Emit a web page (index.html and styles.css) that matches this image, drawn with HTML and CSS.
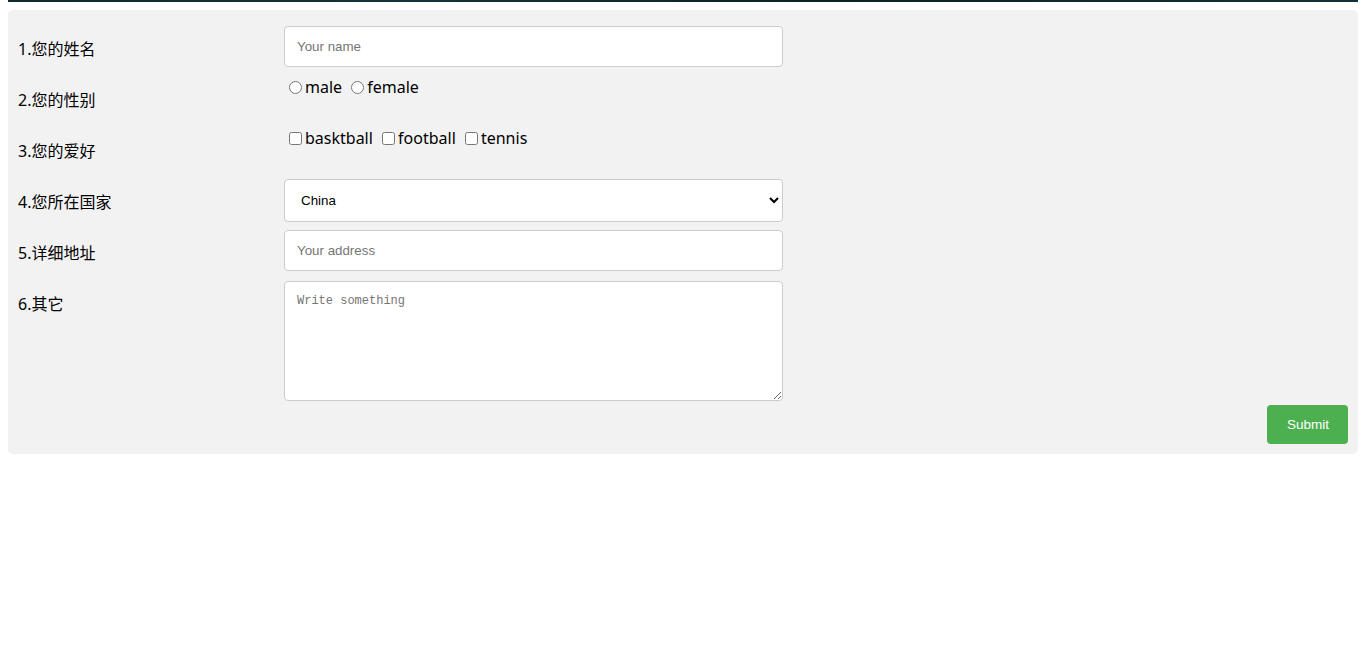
FILE: index.html
```html
<!DOCTYPE html>
<html>
<head>
<meta charset="utf-8">
<link rel="stylesheet" href="styles.css">
</head>
<body>
<div class="topbar"></div>
<div class="container">
  <form>
    <div class="row">
      <div class="col-25"><label>1.您的姓名</label></div>
      <div class="col-75"><input class="field" type="text" placeholder="Your name"></div>
    </div>
    <div class="row">
      <div class="col-25"><label>2.您的性别</label></div>
      <div class="col-75 opts"><input type="radio" name="g">male <input type="radio" name="g">female</div>
    </div>
    <div class="row">
      <div class="col-25"><label>3.您的爱好</label></div>
      <div class="col-75 opts"><input type="checkbox">basktball <input type="checkbox">football <input type="checkbox">tennis</div>
    </div>
    <div class="row">
      <div class="col-25"><label>4.您所在国家</label></div>
      <div class="col-75"><select class="field sel"><option>China</option><option>USA</option></select></div>
    </div>
    <div class="row">
      <div class="col-25"><label>5.详细地址</label></div>
      <div class="col-75"><input class="field" type="text" placeholder="Your address"></div>
    </div>
    <div class="row">
      <div class="col-25"><label>6.其它</label></div>
      <div class="col-75"><textarea class="field area" placeholder="Write something"></textarea></div>
    </div>
    <div class="submit-row">
      <button type="button" class="submit">Submit</button>
    </div>
  </form>
</div>
</body>
</html>
```
FILE: styles.css
```css
body {
  margin: 0 8px 8px 8px;
  font-family: "Noto Sans", "Noto Sans CJK SC", sans-serif;
  font-size: 16px;
  color: #000;
  background: #fff;
}
.topbar {
  height: 2px;
  margin: 0 -8px;
  background: linear-gradient(90deg, #0c2a2e, #12343a 30%, #0a2326 60%, #103238);
}
.container {
  margin-top: 8px;
  background: #f2f2f2;
  border-radius: 5px;
  padding: 10px;
}
.row {
  display: flex;
}
.col-25 {
  width: 20%;
  margin-top: 6px;
  flex: none;
}
.col-75 {
  flex: 1;
  margin-top: 6px;
}
label {
  display: inline-block;
  padding: 13px 12px 11px 0;
  line-height: 21px;
}
.opts {
  line-height: 21px;
}
.opts input {
  margin: 3px 3px 0 5px;
  vertical-align: -1px;
}
.field {
  display: block;
  box-sizing: border-box;
  width: 499px;
  padding: 12px;
  border: 1px solid #ccc;
  border-radius: 4px;
  background: #fff;
  font-family: "Liberation Sans", Arial, sans-serif;
  font-size: 13.33px;
  height: 41px;
}
.field::placeholder {
  color: #757575;
}
.sel {
  height: 43px;
  padding: 12px 8px 12px 12px;
  color: #000;
}
.area {
  height: 120px;
  resize: vertical;
  font-family: "Liberation Mono", monospace;
  font-size: 12px;
  line-height: 15px;
  padding: 12px;
}
.submit-row {
  display: flex;
  justify-content: flex-end;
  margin-top: 4px;
}
.submit {
  background: #4caf50;
  color: #fff;
  border: none;
  border-radius: 4px;
  padding: 12px 20px;
  height: 39px;
  width: 81px;
  font-family: "Liberation Sans", Arial, sans-serif;
  font-size: 13.5px;
  cursor: pointer;
}
```
